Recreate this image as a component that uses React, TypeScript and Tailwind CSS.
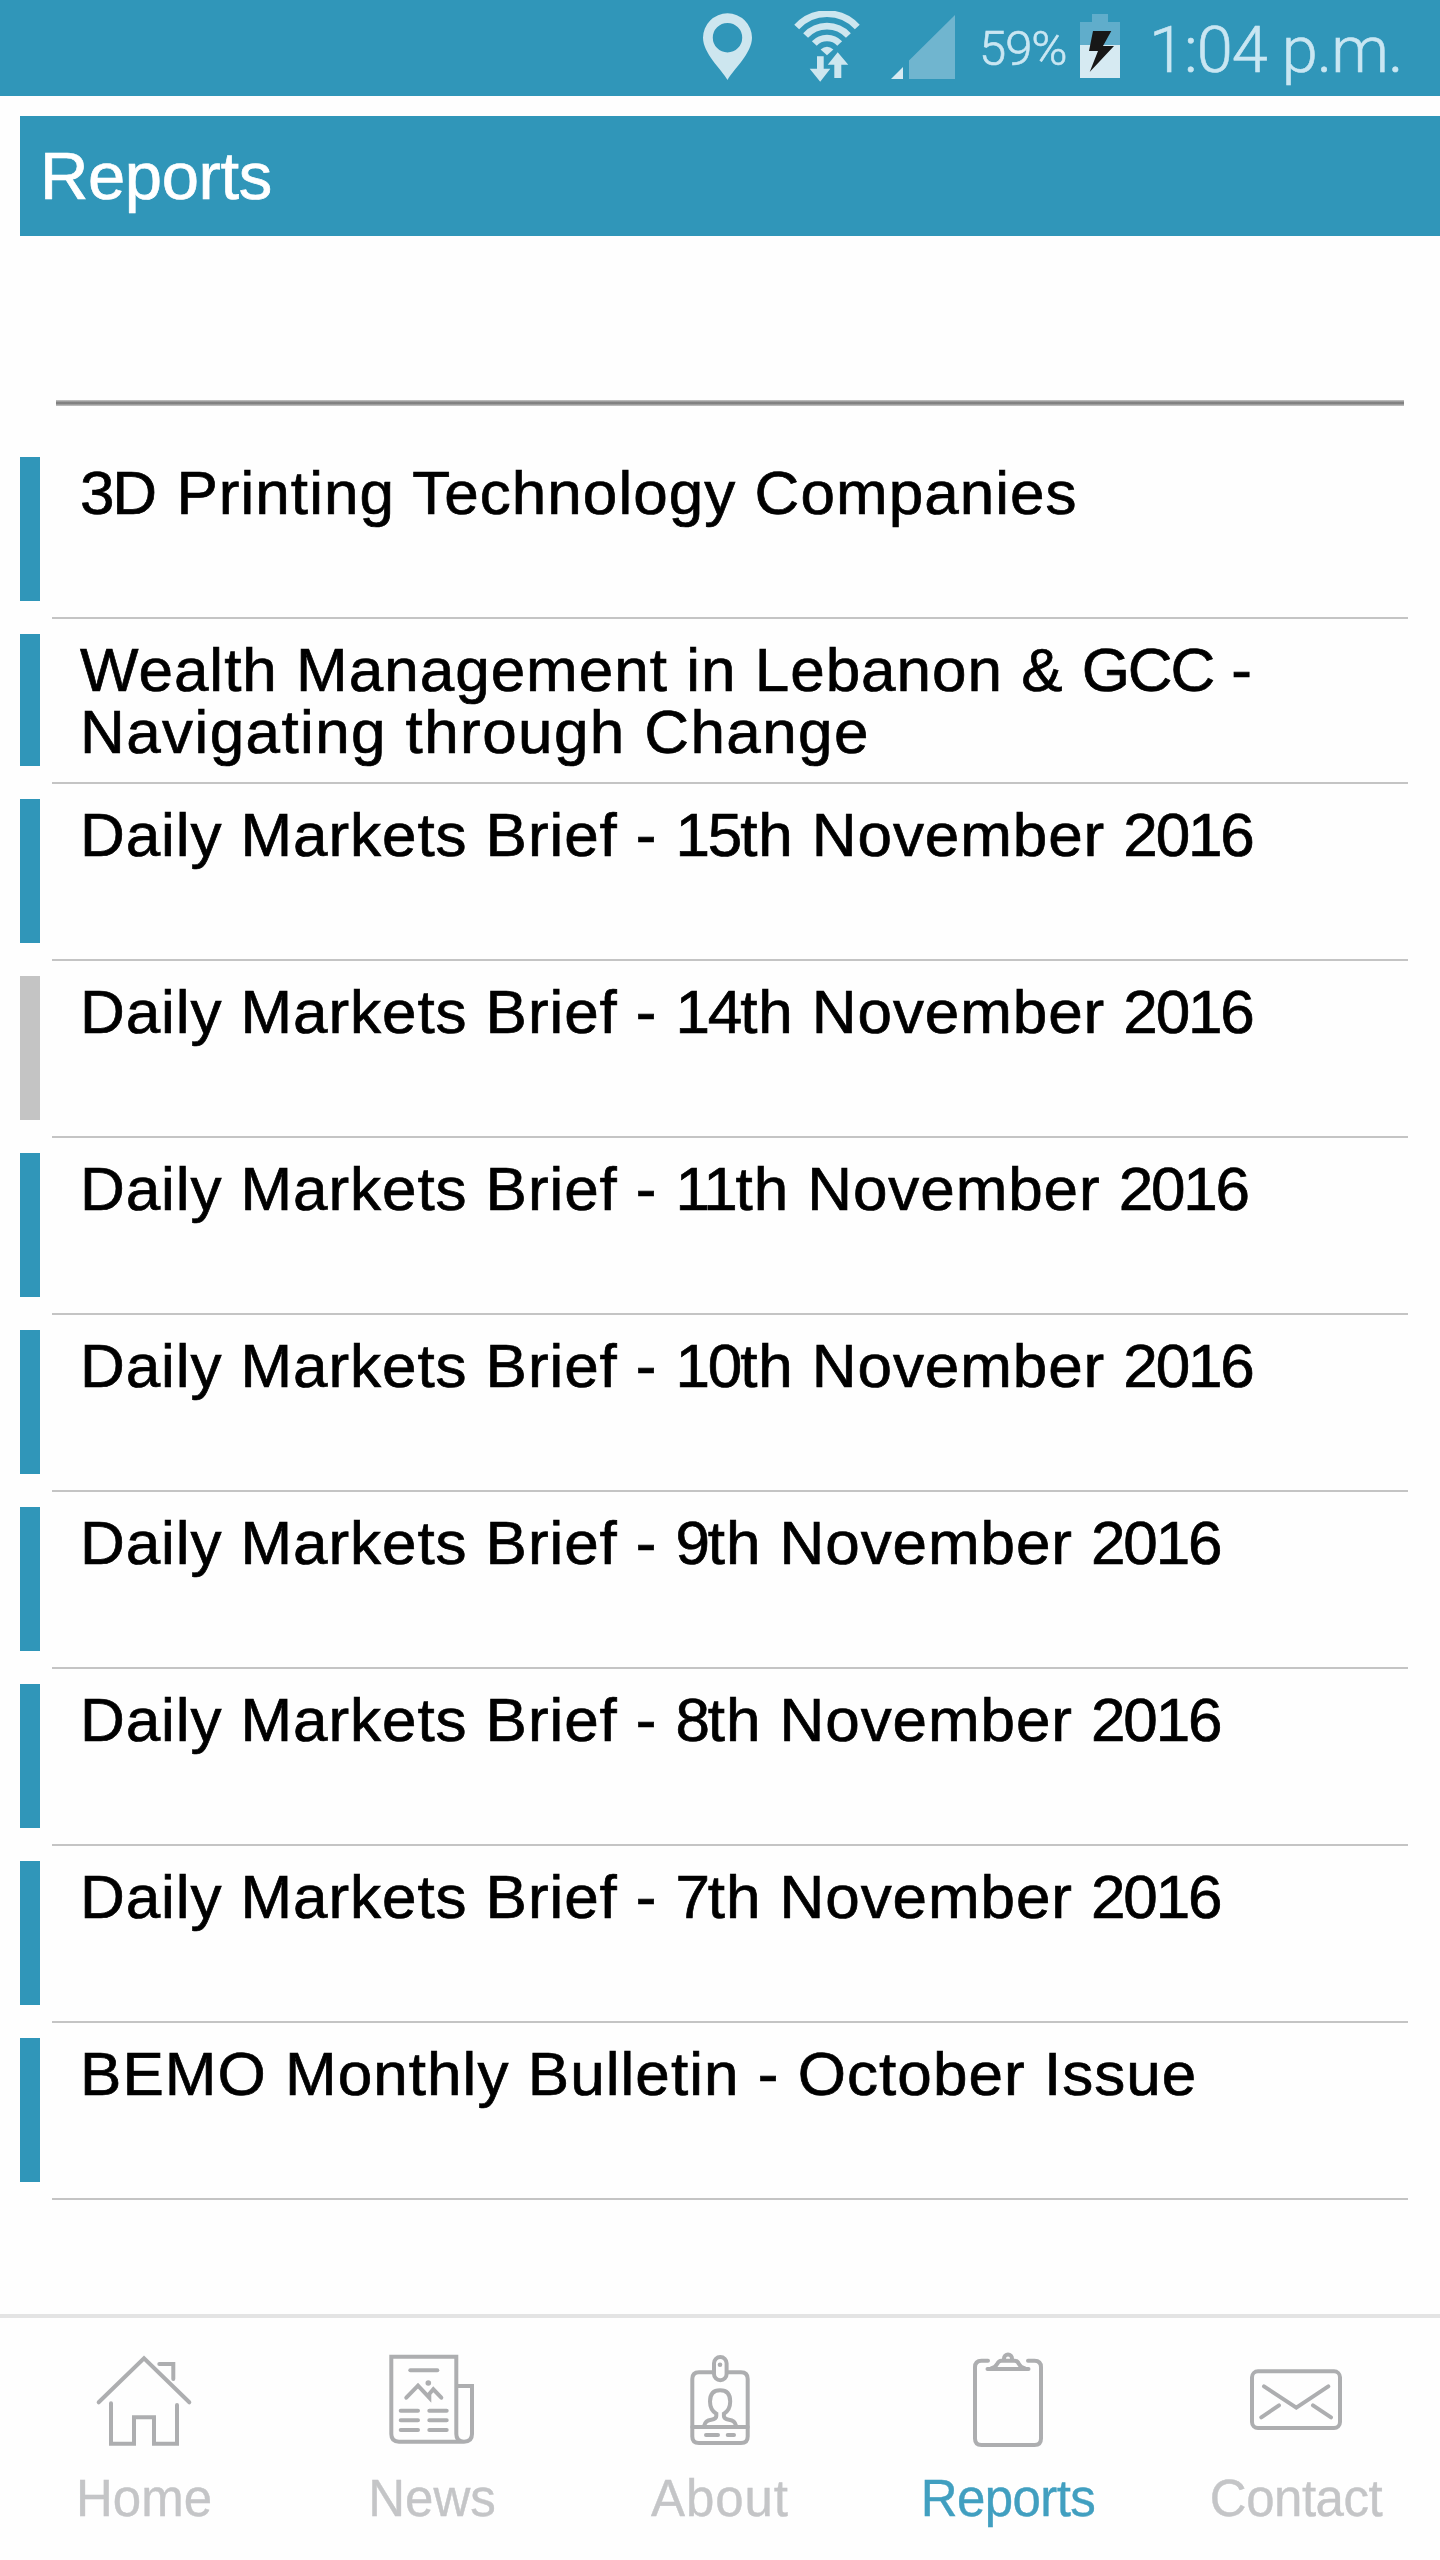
import type { ReactNode } from "react";

import clsx from "clsx";

interface Report {
  lines: string[];
  tracking?: string;
  read?: boolean;
}

const reports: Report[] = [
  { lines: ["3D Printing Technology Companies"] },
  {
    lines: [
      "Wealth Management in Lebanon & GCC -",
      "Navigating through Change",
    ],
    tracking: "tracking-[1px]",
  },
  ...["15th", "14th", "11th", "10th", "9th", "8th", "7th"].map((day) => ({
    lines: [`Daily Markets Brief - ${day} November 2016`],
    tracking: "tracking-[0.92px]",
    read: day === "14th",
  })),
  { lines: ["BEMO Monthly Bulletin - October Issue"] },
];

function StatusBar() {
  return (
    <div className="flex h-24 items-start bg-[#3096b9] pl-[703px] font-[Roboto,sans-serif] font-light text-[#c9e6f2] [-webkit-text-stroke:0.6px_#c9e6f2]">
      <svg className="mt-[13px] h-[67px] w-[49px] shrink-0" viewBox="0 0 49 67">
        <path
          fill="#cde6ef"
          fillRule="evenodd"
          d="M24.5 67C18 56 0 40 0 24.8a24.5 24.5 0 0 1 49 0C49 40 31 56 24.5 67ZM24.5 10a14.7 14.7 0 1 0 0 29.4 14.7 14.7 0 0 0 0-29.4Z"
        />
      </svg>
      <svg
        className="mt-[11px] ml-[42px] h-[71px] w-[66px] shrink-0"
        viewBox="0 0 66 71"
      >
        <g fill="none" stroke="#cde6ef" strokeWidth="6.6">
          <path d="M2.7 16A41 41 0 0 1 63.3 16" />
          <path d="M11.6 24.6A29 29 0 0 1 54.4 24.6" />
          <path d="M20.3 32.6A17.3 17.3 0 0 1 45.7 32.6" />
        </g>
        <g fill="#cde6ef">
          <path d="M33 44.3 26.6 38.5Q33 33 39.4 38.5Z" />
          <path d="M23 45.3h6.7v12.4h6.6L26.2 70.7 15.7 57.7H23Z" />
          <path d="M43.7 41.3 54.3 53.7h-7V67h-7V53.7h-6.6Z" />
        </g>
      </svg>
      <svg
        className="mt-[15px] ml-[31px] h-16 w-16 shrink-0"
        viewBox="0 0 64 64"
      >
        <path fill="#d6eaf2" d="M0 64 12 52V64Z" />
        <path fill="#70b5cf" d="M18 45.5 64 0V64H18Z" />
      </svg>
      <span className="mt-[21px] ml-6 w-[88px] text-[49px] leading-[56px] tracking-[-1px]">
        59%
      </span>
      <svg
        className="mt-[14px] ml-[13px] h-16 w-10 shrink-0"
        viewBox="0 0 40 64"
      >
        <path fill="#60adcb" d="M12 0h16v8h12v23H0V8h12Z" />
        <path fill="#d6eaf2" d="M0 31h40v33H0Z" />
        <path fill="#171717" d="M13 17h18.3L23 32h11L9.7 58 18 37H9Z" />
      </svg>
      <span className="mt-3 ml-[29px] text-[65px] leading-[76px] tracking-[-1px] whitespace-nowrap">
        1:04 p.m.
      </span>
    </div>
  );
}

// Digits and the GCC acronym sit tighter than the rest of the title
function Title({ text }: { text: string }) {
  return text.split(/(\d+|GCC)/).map((part, i) =>
    i % 2 === 1 ? (
      <span key={i} className="tracking-[-2.2px]">
        {part}
      </span>
    ) : (
      part
    ),
  );
}

function ReportRow({ lines, tracking = "tracking-[1.05px]", read }: Report) {
  const single = lines.length === 1;

  return (
    <li className="pt-[15px]">
      <div className={clsx("flex pl-5", single && "min-h-36")}>
        <div
          className={clsx("w-5 shrink-0", read ? "bg-[#c4c4c4]" : "bg-[#3096b9]")}
        />
        <div className="pt-[5px] pb-[3px] pl-10 text-[62px] leading-[62px] whitespace-nowrap text-black [-webkit-text-stroke:0.7px_#000]">
          {lines.map((line, i) => (
            <div key={line} className={i > 0 ? "tracking-[1.4px]" : tracking}>
              <Title text={line} />
            </div>
          ))}
        </div>
      </div>
      <div className="mt-4 mr-8 ml-[52px] h-0.5 bg-[#c4c4c4]" />
    </li>
  );
}

function Tab({
  label,
  className,
  children,
}: {
  label: string;
  className: string;
  children: ReactNode;
}) {
  return (
    <div className="flex w-[288px] flex-col items-center pt-8">
      <svg
        className="h-[100px] w-[120px]"
        viewBox="0 0 120 100"
        fill="none"
        stroke="#adaeb0"
        strokeWidth="4"
        strokeLinecap="round"
      >
        {children}
      </svg>
      <span
        className={clsx(
          "mt-[19px] text-[51px] leading-[60px] [-webkit-text-stroke:0.4px_currentColor]",
          className,
        )}
      >
        {label}
      </span>
    </div>
  );
}

function TabBar() {
  return (
    <nav className="flex flex-1 border-t-4 border-[#e4e4e4]">
      <Tab label="Home" className="text-[#c4c5c7]">
        <path d="M14.7 52.3 60 8.3l45.3 44" />
        <path d="M75.3 14h14v15" />
        <path d="M27 53.3v40.4h23V67.3h20v26.4h23V55" />
      </Tab>
      <Tab label="News" className="text-[#c4c5c7]">
        <path d="M84.3 84V6.7h-65V84q0 7.7 7.7 7.7h65q8 0 8-7.7V36H84.3M84.3 84q0 7.7 7.7 7.7" />
        <path d="M38.3 20.3h27" />
        <path d="M34.3 47.7 46 35.7 57.3 47.7V44l4-4.7 8 8.4" />
        <circle cx="56.3" cy="33" r="2.8" fill="#adaeb0" stroke="none" />
        <path d="M28.7 60.7H46M57.3 60.7h17.4M28.7 70.3H46M57.3 70.3h17.4M28.7 80H46M57.3 80h17.4" />
      </Tab>
      <Tab label="About" className="tracking-[0.9px] text-[#c4c5c7]">
        <path d="M54 22.3H39q-6.7 0-6.7 6.7v57.5q0 6.5 6.7 6.5h42q6.7 0 6.7-6.5V29q0-6.7-6.7-6.7H67" />
        <rect x="54" y="7" width="12.6" height="23.3" rx="6.3" />
        <circle cx="60" cy="14.8" r="2.3" fill="#adaeb0" stroke="none" />
        <path d="M32.3 77h55.4" />
        <path d="M44.3 75.5q1-5 7-5.8 5-.6 5-3.7v-2.3Q50 60 50 51.5q0-11.2 10.1-11.2t10.1 11.2q0 8.500-6.300 12.200V66q0 3.100 5 3.700 6 .8 7 5.800" />
        <path d="M46 85h12M67.7 85h6.3" />
      </Tab>
      <Tab label="Reports" className="tracking-[-0.6px] text-[#419fc0]">
        <path d="M40 10.7h-6.5q-6.5 0-6.5 6.5v71.3q0 6.5 6.5 6.5h53q6.5 0 6.5-6.5V17.2q0-6.5-6.5-6.5H80" />
        <path d="M39.5 19h41" />
        <path d="M43 18.5q4.5-1.2 6-4.3 1.5-3.5 4.5-3.5h13q3 0 4.5 3.5 1.5 3.1 6 4.3" />
        <path d="M56 10V8.5a4 4 0 0 1 8 0V10" />
      </Tab>
      <Tab label="Contact" className="tracking-[-0.5px] text-[#c4c5c7]">
        <rect x="16" y="21.3" width="88" height="56.7" rx="6" />
        <path d="M28 36.3 60.3 57.7l32-21.4" />
        <path d="M25.3 67.3 43 55.3M77 55.3l18 12" />
      </Tab>
    </nav>
  );
}

export default function App() {
  return (
    <div className="flex h-[2560px] w-[1440px] flex-col overflow-hidden bg-[#fefefe] font-['Liberation_Sans',Arial,sans-serif]">
      <StatusBar />
      <header className="mt-5 ml-5 flex h-[120px] shrink-0 items-center bg-[#3096b9] pl-5 text-white">
        <h1 className="text-[67px] leading-[76px] tracking-[-0.4px] [-webkit-text-stroke:0.7px_#fff]">
          Reports
        </h1>
      </header>
      <div className="mt-[164px] mr-9 ml-14 h-1.5 shrink-0 bg-linear-to-b from-[#c8c8c8] via-[#747474] to-[#c8c8c8]" />
      <ul className="mt-9 h-[1872px] shrink-0">
        {reports.map((report) => (
          <ReportRow key={report.lines[0]} {...report} />
        ))}
      </ul>
      <TabBar />
    </div>
  );
}
